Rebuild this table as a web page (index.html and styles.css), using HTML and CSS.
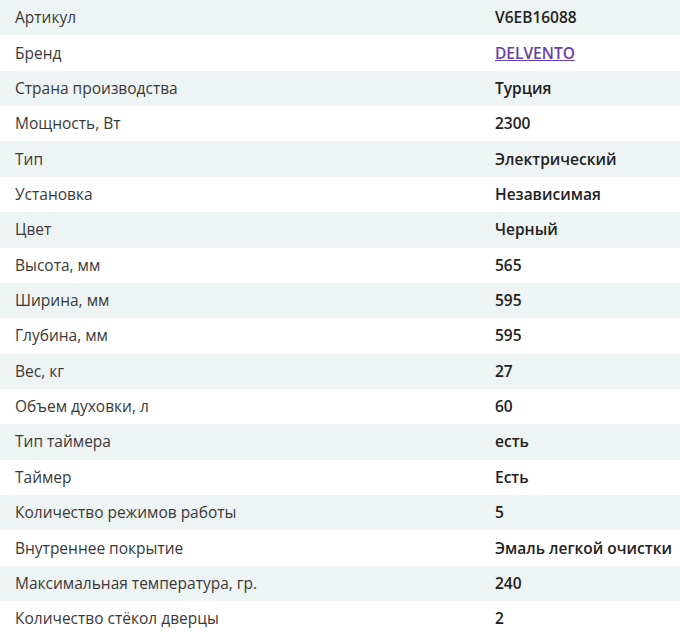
FILE: index.html
```html
<!DOCTYPE html>
<html lang="ru">
<head>
<meta charset="utf-8">
<link rel="stylesheet" href="styles.css">
</head>
<body>
<table class="specs">
<tr><td class="k">Артикул</td><td class="v">V6EB16088</td></tr>
<tr><td class="k">Бренд</td><td class="v"><a href="#" class="brand">DELVENTO</a></td></tr>
<tr><td class="k">Страна производства</td><td class="v">Турция</td></tr>
<tr><td class="k">Мощность, Вт</td><td class="v">2300</td></tr>
<tr><td class="k">Тип</td><td class="v">Электрический</td></tr>
<tr><td class="k">Установка</td><td class="v">Независимая</td></tr>
<tr><td class="k">Цвет</td><td class="v">Черный</td></tr>
<tr><td class="k">Высота, мм</td><td class="v">565</td></tr>
<tr><td class="k">Ширина, мм</td><td class="v">595</td></tr>
<tr><td class="k">Глубина, мм</td><td class="v">595</td></tr>
<tr><td class="k">Вес, кг</td><td class="v">27</td></tr>
<tr><td class="k">Объем духовки, л</td><td class="v">60</td></tr>
<tr><td class="k">Тип таймера</td><td class="v">есть</td></tr>
<tr><td class="k">Таймер</td><td class="v">Есть</td></tr>
<tr><td class="k">Количество режимов работы</td><td class="v">5</td></tr>
<tr><td class="k">Внутреннее покрытие</td><td class="v">Эмаль легкой очистки</td></tr>
<tr><td class="k">Максимальная температура, гр.</td><td class="v">240</td></tr>
<tr><td class="k">Количество стёкол дверцы</td><td class="v">2</td></tr>
</table>
</body>
</html>
```
FILE: styles.css
```css
html, body {
  margin: 0;
  padding: 0;
  background: #ffffff;
}
body {
  font-family: "Open Sans", "Noto Sans", sans-serif;
  font-size: 15.5px;
  color: #3a3a3a;
}
.specs {
  width: 680px;
  border-collapse: collapse;
}
.specs tr {
  height: 35.36px;
}
.specs tr:nth-child(odd) {
  background: #eef3f3;
}
.k {
  padding: 0 0 1px 15px;
  width: 465px;
  line-height: 20px;
  vertical-align: middle;
}
.v {
  padding: 0 0 1px 15px;
  line-height: 20px;
  font-weight: 600;
  color: #222222;
  vertical-align: middle;
}
.brand {
  color: #6a3fa8;
  text-decoration: underline;
}
```
